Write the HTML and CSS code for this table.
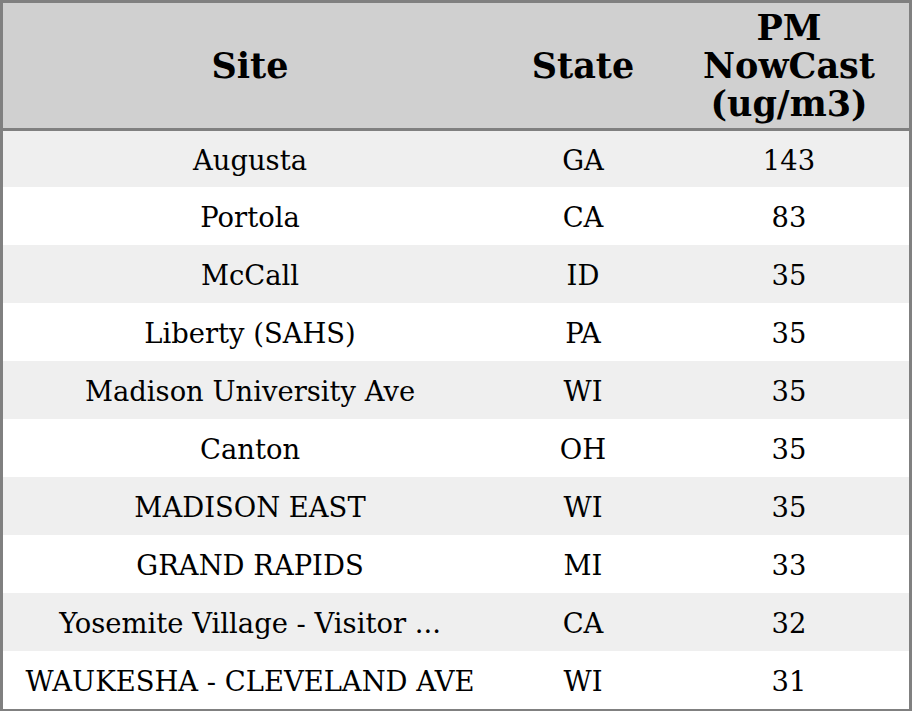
FILE: index.html
```html
<!DOCTYPE html>
<html>
<head>
<meta charset="utf-8">
<link rel="stylesheet" href="styles.css">
</head>
<body>
<table class="aq-table">
  <colgroup>
    <col class="col-site">
    <col class="col-state">
    <col class="col-pm">
  </colgroup>
  <thead>
    <tr>
      <th>Site</th>
      <th>State</th>
      <th>PM<br>NowCast<br>(ug/m3)</th>
    </tr>
  </thead>
  <tbody>
    <tr><td>Augusta</td><td>GA</td><td>143</td></tr>
    <tr><td>Portola</td><td>CA</td><td>83</td></tr>
    <tr><td>McCall</td><td>ID</td><td>35</td></tr>
    <tr><td>Liberty (SAHS)</td><td>PA</td><td>35</td></tr>
    <tr><td>Madison University Ave</td><td>WI</td><td>35</td></tr>
    <tr><td>Canton</td><td>OH</td><td>35</td></tr>
    <tr><td>MADISON EAST</td><td>WI</td><td>35</td></tr>
    <tr><td>GRAND RAPIDS</td><td>MI</td><td>33</td></tr>
    <tr><td>Yosemite Village - Visitor ...</td><td>CA</td><td>32</td></tr>
    <tr><td>WAUKESHA - CLEVELAND AVE</td><td>WI</td><td>31</td></tr>
  </tbody>
</table>
</body>
</html>
```

FILE: styles.css
```css
html, body {
  margin: 0;
  padding: 0;
  background: #ffffff;
}

.aq-table {
  width: 912px;
  table-layout: fixed;
  border-collapse: separate;
  border-spacing: 0;
  border: 3px solid #808080;
  font-family: "DejaVu Serif", serif;
  color: #000;
}

.col-site { width: 494px; }
.col-state { width: 172px; }
.col-pm { width: 240px; }

.aq-table th {
  background: #d0d0d0;
  font-size: 35px;
  font-weight: bold;
  line-height: 38px;
  height: 125px;
  padding: 0;
  text-align: center;
  vertical-align: middle;
  border-bottom: 3px solid #808080;
}

.aq-table td {
  font-size: 27.4px;
  line-height: 30px;
  height: 54px;
  padding: 4px 0 0 0;
  text-align: center;
  vertical-align: middle;
  white-space: nowrap;
}

.aq-table tbody tr:first-child td {
  height: 52px;
}

.aq-table tbody tr:nth-child(odd) td {
  background: #efefef;
}
```
